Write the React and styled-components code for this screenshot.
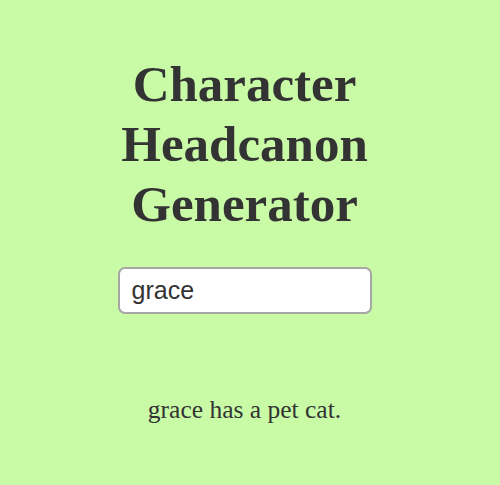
import React, { useState } from "react"
import styled, { createGlobalStyle } from "styled-components"

const GlobalStyle = createGlobalStyle`
  html, body {
    margin: 0;
    padding: 0;
    background: #c9fba7;
  }
  body {
    font-family: "Liberation Serif", "Times New Roman", serif;
    color: #333333;
  }
`

const Page = styled.div`
  display: flex;
  flex-direction: column;
  align-items: center;
  min-height: 485px;
  padding: 54px 11px 0 0;
  box-sizing: border-box;
`

const Title = styled.h1`
  margin: 0;
  width: 300px;
  text-align: center;
  font-size: 51px;
  line-height: 60px;
  font-weight: bold;
  color: #333333;
`

const NameInput = styled.input`
  margin-top: 33px;
  width: 254px;
  height: 47px;
  box-sizing: border-box;
  padding: 0 12px;
  border: 2px solid #a6a6a6;
  border-radius: 7px;
  background: #ffffff;
  font-family: "Liberation Sans", Arial, sans-serif;
  font-size: 25px;
  color: #333333;
  outline: none;
`

const Result = styled.p`
  margin: 81px 0 0;
  font-size: 25.5px;
  color: #333333;
`

export default function App() {
  const [name, setName] = useState("grace")

  return (
    <>
      <GlobalStyle />
      <Page>
        <Title>Character Headcanon Generator</Title>
        <NameInput value={name} onChange={e => setName(e.target.value)} />
        <Result>{name} has a pet cat.</Result>
      </Page>
    </>
  )
}
